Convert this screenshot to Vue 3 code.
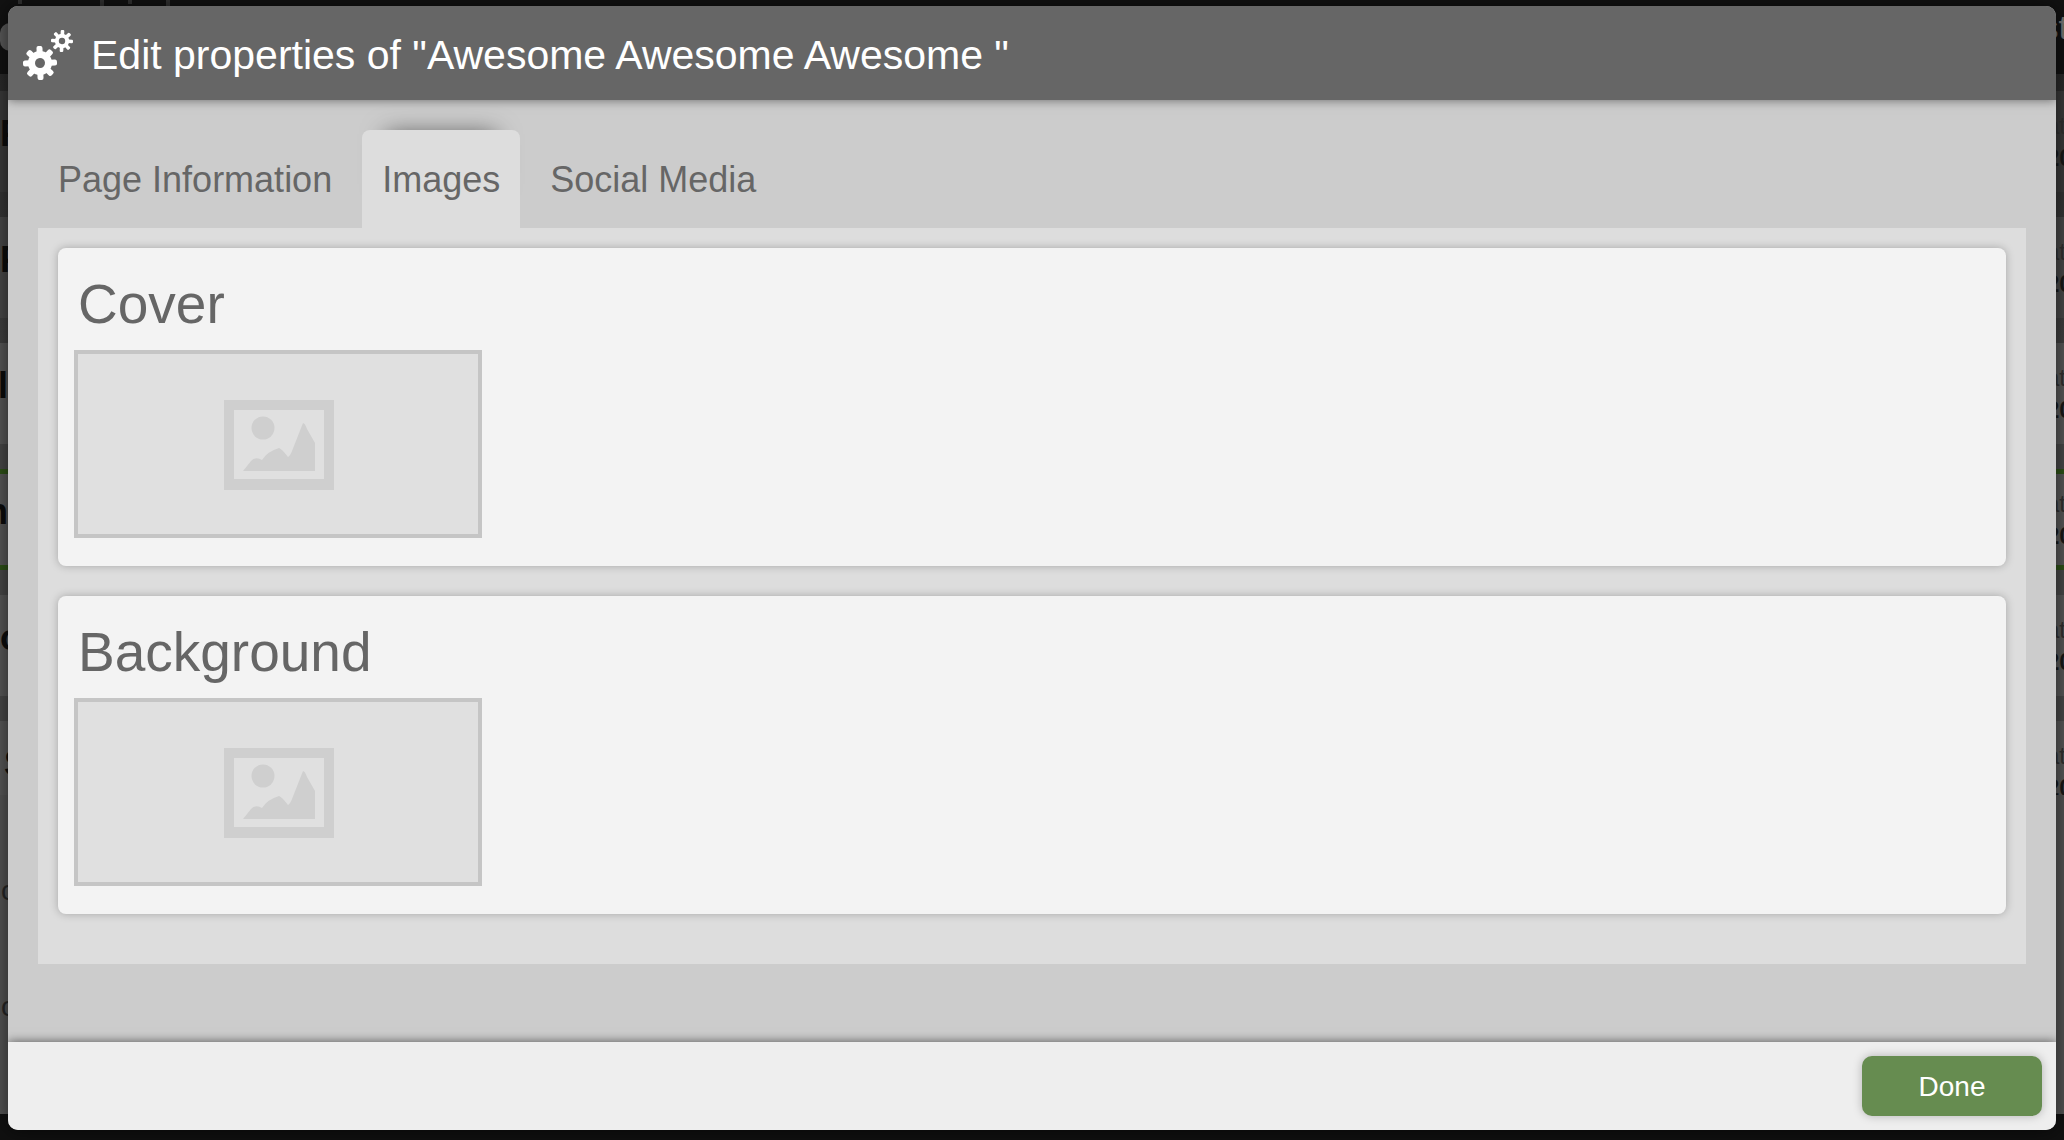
<script setup>
import { ref } from 'vue'

const tabs = ['Page Information', 'Images', 'Social Media']
const active = ref('Images')
const images = ['Cover', 'Background']
const rows = [
  { start: 'F', end: '20' },
  { start: 'F', end: '20' },
  { start: 'l', end: '20', flush: true },
  { start: 'n', end: '20', flush: true, selected: true },
  { start: 'o', end: '20' },
  { start: 'S', end: '20', inset: true },
]
const teeth = [0, 45, 90, 135, 180, 225, 270, 315]
</script>

<template>
  <div class="screen">
    <div class="page" aria-hidden="true">
      <div class="topbar"><i class="pill"></i><span>st</span></div>
      <div class="list">
        <div v-for="(row, i) in rows" :key="i" class="row" :class="{ selected: row.selected }">
          <b class="row-name" :class="{ flush: row.flush, inset: row.inset }">{{ row.start }}</b>
          <div class="row-date"><span>at</span><b>{{ row.end }}</b></div>
        </div>
      </div>
      <div class="notes"><span>c</span><span>c</span></div>
    </div>

    <section class="dialog" role="dialog" aria-labelledby="dialog-title">
      <header class="head">
        <svg class="gears" viewBox="0 0 52 52" aria-hidden="true">
          <g transform="translate(17 34) rotate(-2)" fill="#fff">
            <rect v-for="a in teeth" :key="a" x="-3" y="-17" width="6" height="9" rx="2" :transform="`rotate(${a})`" />
            <circle r="8.500" fill="none" stroke="#fff" stroke-width="7" />
          </g>
          <g transform="translate(39 12) rotate(3)" fill="#fff">
            <rect v-for="a in teeth" :key="a" x="-1.800" y="-11" width="3.600" height="6" rx="1.200" :transform="`rotate(${a})`" />
            <circle r="5.200" fill="none" stroke="#fff" stroke-width="4" />
          </g>
        </svg>
        <h1 id="dialog-title">Edit properties of "Awesome Awesome Awesome "</h1>
      </header>

      <main class="body">
        <div class="tabs" role="tablist">
          <button
            v-for="tab in tabs"
            :key="tab"
            type="button"
            role="tab"
            class="tab"
            :class="{ active: tab === active }"
            :aria-selected="tab === active"
            @click="active = tab"
          >{{ tab }}</button>
        </div>
        <div class="panel" role="tabpanel">
          <article v-for="name in images" :key="name" class="card">
            <h2>{{ name }}</h2>
            <button type="button" class="thumb" :aria-label="name">
              <svg viewBox="0 0 110 90" aria-hidden="true">
                <path fill="#cfcfcf" fill-rule="evenodd" d="M0 0H110V90H0ZM10 10V79H100V10Z" />
                <circle cx="39" cy="28" r="11.500" fill="#cfcfcf" />
                <path fill="#cfcfcf" d="M19 71L27 61Q32 56 38 60Q44 51 55 48Q58 49 64 57Q66 56 68 51L79 23Q81 23 83 29L91 43V71Z" />
              </svg>
            </button>
          </article>
        </div>
      </main>

      <footer class="foot">
        <button type="button" class="done">Done</button>
      </footer>
    </section>
  </div>
</template>

<style>
body {
  margin: 0;
  background: #101010;
}
</style>

<style scoped>
.screen {
  position: relative;
  min-height: 100vh;
  box-sizing: border-box;
  padding: 6px 8px 10px;
  display: flex;
  overflow: hidden;
  font-family: "Liberation Sans", Arial, sans-serif;
  color: #666;
}

/* Dimmed page behind the dialog */
.page {
  position: absolute;
  inset: 0;
  display: flex;
  flex-direction: column;
  padding-bottom: 26px;
  background: #101010;
}
.topbar {
  height: 74px;
  flex: none;
  display: flex;
  align-items: center;
  justify-content: space-between;
  font-size: 34px;
  line-height: 40px;
  color: #777;
  background:
    linear-gradient(#333, #333) 18px 0 / 4px 4px no-repeat,
    linear-gradient(#333, #333) 100px 0 / 4px 6px no-repeat,
    linear-gradient(#333, #333) 128px 0 / 4px 4px no-repeat,
    linear-gradient(#333, #333) 166px 0 / 4px 6px no-repeat,
    #121212;
}
.topbar span {
  margin: 0 -4px 20px 0;
}
.pill {
  width: 28px;
  height: 28px;
  border-radius: 10px;
  background: #5a5a5a;
}
.list {
  height: 704px;
  flex: none;
  overflow: hidden;
  display: flex;
  flex-direction: column;
  gap: 25px;
  padding-top: 17px;
  background: linear-gradient(#2a2a2a, #484848 360px);
}
.row {
  height: 101px;
  flex: none;
  box-sizing: border-box;
  display: flex;
  align-items: center;
  justify-content: space-between;
  background: #585858;
}
.row:nth-child(1) {
  background: #3a3a3a;
}
.row:nth-child(2) {
  background: #484848;
}
.row.selected {
  border: solid #2f5218;
  border-width: 5px 0;
}
.row-name {
  width: 24px;
  margin-bottom: 16px;
  font-size: 36px;
  line-height: 40px;
  color: #0c0c0c;
}
.row-name.flush {
  width: 8px;
  display: flex;
  justify-content: flex-end;
}
.row-name.inset {
  padding-left: 4px;
}
.row-date {
  width: 18px;
  display: flex;
  flex-direction: column;
  font-size: 24px;
  line-height: 32px;
  color: #303030;
}
.row-date b {
  color: #181818;
}
.notes {
  flex: 1;
  display: flex;
  flex-direction: column;
  gap: 84px;
  padding: 80px 0 0 1px;
  background: #545454;
  font-size: 28px;
  line-height: 32px;
  color: #262626;
}

.dialog {
  position: relative;
  flex: 1;
  min-width: 0;
  display: flex;
  flex-direction: column;
  overflow: hidden;
  border-radius: 10px;
  background: #ccc;
  box-shadow: 0 0 20px rgba(0, 0, 0, 0.6);
}
.head {
  position: relative;
  box-sizing: border-box;
  display: flex;
  align-items: center;
  gap: 16px;
  height: 94px;
  padding: 4px 15px 0;
  background: #666;
  color: #fff;
  box-shadow: 0 0 10px rgba(0, 0, 0, 0.5);
}
.gears {
  width: 52px;
  height: 52px;
}
h1 {
  margin: 0;
  font-size: 41px;
  font-weight: 400;
  line-height: 48px;
}
.body {
  flex: 1;
  padding: 30px;
}
.tabs {
  display: flex;
  gap: 10px;
}
.tab {
  height: 98px;
  padding: 2px 20px 0;
  border: 0;
  border-radius: 8px 8px 0 0;
  background: transparent;
  color: #666;
  font: 36px/40px "Liberation Sans", Arial, sans-serif;
}
.tab.active {
  background: #ddd;
  box-shadow: 0 -20px 24px -24px rgba(0, 0, 0, 0.6);
}
.panel {
  position: relative;
  display: flex;
  flex-direction: column;
  gap: 30px;
  padding: 20px 20px 50px;
  background: #ddd;
}
.card {
  height: 318px;
  box-sizing: border-box;
  padding: 24px 16px 28px;
  border-radius: 8px;
  background: #f3f3f3;
  box-shadow: 0 0 8px rgba(0, 0, 0, 0.25);
}
h2 {
  margin: 0 4px 14px;
  font-size: 55px;
  font-weight: 400;
  line-height: 64px;
}
.thumb {
  box-sizing: border-box;
  display: flex;
  align-items: center;
  justify-content: center;
  width: 408px;
  height: 188px;
  padding: 2px 0 0 2px;
  border: 4px solid #c5c5c5;
  background: #e0e0e0;
}
.thumb svg {
  width: 110px;
  height: 90px;
}
.foot {
  position: relative;
  display: flex;
  justify-content: flex-end;
  padding: 14px;
  background: #eee;
  box-shadow: 0 0 10px rgba(0, 0, 0, 0.6);
}
.done {
  width: 180px;
  height: 60px;
  padding: 2px 0 0;
  border: 0;
  border-radius: 10px;
  background: #668c50;
  box-shadow: 0 0 10px rgba(0, 0, 0, 0.25);
  color: #fff;
  font: 28px/32px "Liberation Sans", Arial, sans-serif;
}
</style>
